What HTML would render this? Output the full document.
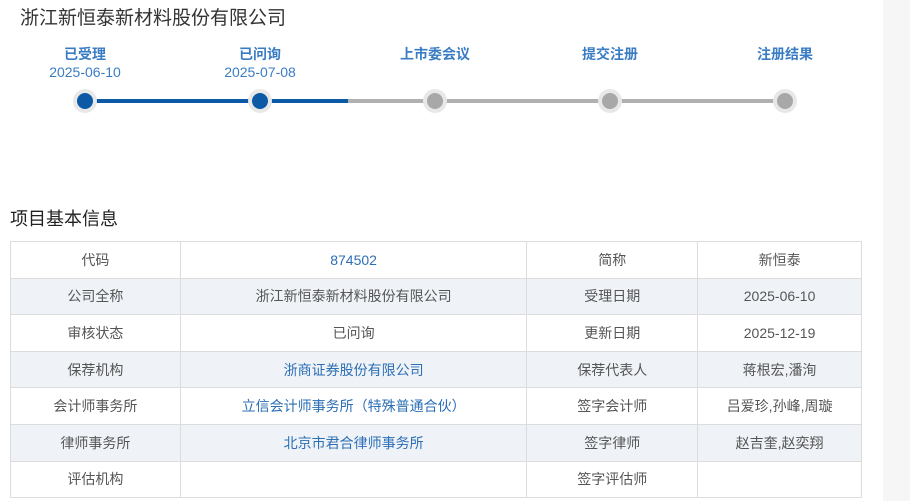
<!DOCTYPE html>
<html><head><meta charset="utf-8"><style>
body{margin:0;width:910px;height:501px;background:#fff;font-family:"Liberation Sans","Noto Sans CJK SC",sans-serif;position:relative;overflow:hidden}
.strip{position:absolute;left:883px;top:0;width:27px;height:501px;background:#f6f6f6}
.t{position:absolute;left:20px;top:3px;font-size:19px;color:#333}
.lab{position:absolute;width:120px;text-align:center;font-size:14px;font-weight:bold;color:#3a7cc4;top:44px}
.dt{position:absolute;width:120px;text-align:center;font-size:14px;color:#3a7cc4;top:64px}
.line{position:absolute;top:99px;height:4px}
.dot{position:absolute;top:89px;width:24px;height:24px;border-radius:50%;background:#e8e8e8}
.dot i{position:absolute;left:4px;top:4px;width:16px;height:16px;border-radius:50%}
.h{position:absolute;left:10px;top:205px;font-size:18px;color:#222}
table{position:absolute;left:10px;top:241px;width:852px;border-collapse:collapse;font-size:14px;color:#555}
td{border:1px solid #dcdcdc;height:35.6px;padding:0;text-align:center}
tr:nth-child(even) td{background:#eff3f8}
a{color:#2c6fb5;text-decoration:none}
</style></head><body>
<div class="strip"></div>
<div class="t">浙江新恒泰新材料股份有限公司</div>
<div class="lab" style="left:25px">已受理</div><div class="dt" style="left:25px">2025-06-10</div>
<div class="lab" style="left:200px">已问询</div><div class="dt" style="left:200px">2025-07-08</div>
<div class="lab" style="left:375px">上市委会议</div>
<div class="lab" style="left:550px">提交注册</div>
<div class="lab" style="left:725px">注册结果</div>
<div class="line" style="left:85px;width:263px;background:#0c5aa6"></div>
<div class="line" style="left:348px;width:437px;background:#b0b0b0"></div>
<div class="dot" style="left:73px"><i style="background:#0c5aa6"></i></div>
<div class="dot" style="left:248px"><i style="background:#0c5aa6"></i></div>
<div class="dot" style="left:423px"><i style="background:#a8a8a8"></i></div>
<div class="dot" style="left:598px"><i style="background:#a8a8a8"></i></div>
<div class="dot" style="left:773px"><i style="background:#a8a8a8"></i></div>
<div class="h">项目基本信息</div>
<table>
<colgroup><col style="width:170px"><col style="width:347px"><col style="width:171px"><col style="width:164px"></colgroup>
<tr><td>代码</td><td><a>874502</a></td><td>简称</td><td>新恒泰</td></tr>
<tr><td>公司全称</td><td>浙江新恒泰新材料股份有限公司</td><td>受理日期</td><td>2025-06-10</td></tr>
<tr><td>审核状态</td><td>已问询</td><td>更新日期</td><td>2025-12-19</td></tr>
<tr><td>保荐机构</td><td><a>浙商证券股份有限公司</a></td><td>保荐代表人</td><td>蒋根宏,潘洵</td></tr>
<tr><td>会计师事务所</td><td><a>立信会计师事务所（特殊普通合伙）</a></td><td>签字会计师</td><td>吕爱珍,孙峰,周璇</td></tr>
<tr><td>律师事务所</td><td><a>北京市君合律师事务所</a></td><td>签字律师</td><td>赵吉奎,赵奕翔</td></tr>
<tr><td>评估机构</td><td></td><td>签字评估师</td><td></td></tr>
</table>
</body></html>
